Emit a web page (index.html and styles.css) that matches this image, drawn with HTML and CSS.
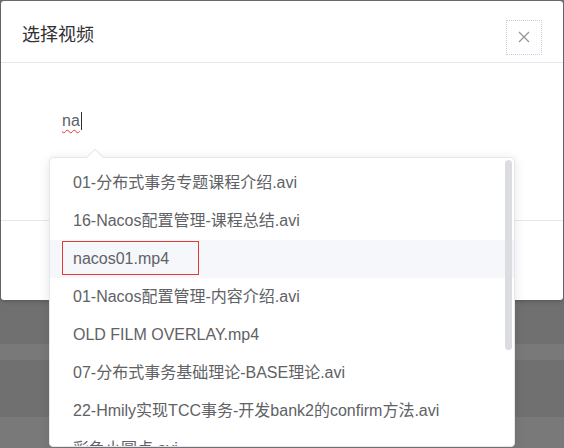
FILE: index.html
```html
<!DOCTYPE html>
<html lang="zh-CN">
<head>
    <meta charset="UTF-8">
    <meta name="viewport" content="width=device-width, initial-scale=1.0">
    <title>选择视频</title>
    <link rel="stylesheet" href="styles.css">
</head>
<body>
    <div class="backdrop">
        <div class="band dark b1"></div>
        <div class="band light b2"></div>
        <div class="band dark b3"></div>
        <div class="band light b4"></div>
    </div>

    <div class="dialog">
        <div class="dialog-header">
            <span class="dialog-title">选择视频</span>
            <button class="dialog-close" type="button">
                <svg width="12" height="12" viewBox="0 0 12 12">
                    <path d="M1 1 L11 11 M11 1 L1 11" stroke="#909399" stroke-width="1.2" fill="none"/>
                </svg>
            </button>
        </div>
        <div class="dialog-body">
            <div class="search-input"><span class="typed">na</span><span class="caret"></span></div>
        </div>
        <div class="dialog-footer"></div>
    </div>

    <div class="suggestions">
        <div class="arrow"></div>
        <ul class="suggestion-list">
            <li>01-分布式事务专题课程介绍.avi</li>
            <li>16-Nacos配置管理-课程总结.avi</li>
            <li class="highlighted">nacos01.mp4<span class="mark"></span></li>
            <li>01-Nacos配置管理-内容介绍.avi</li>
            <li>OLD FILM OVERLAY.mp4</li>
            <li>07-分布式事务基础理论-BASE理论.avi</li>
            <li>22-Hmily实现TCC事务-开发bank2的confirm方法.avi</li>
            <li>彩色小圆点.avi</li>
        </ul>
        <div class="scroll-thumb"></div>
    </div>
</body>
</html>
```

FILE: styles.css
```css
body {
    margin: 0;
    width: 564px;
    height: 448px;
    overflow: hidden;
    background: #717171;
    font-family: "Liberation Sans", "Noto Sans CJK SC", sans-serif;
    position: relative;
}

/* page seen through the mask */
.backdrop {
    display: flex;
    flex-direction: column;
}

.band.dark { background: #707070; }
.band.light { background: #797979; }
.b1 { height: 344px; }
.b2 { height: 16px; }
.b3 { height: 57px; }
.b4 { height: 31px; }

.dialog {
    position: absolute;
    top: 1px;
    left: 1px;
    width: 562px;
    height: 299px;
    background: #fff;
    border-radius: 3px;
    box-shadow: 0 1px 4px rgba(0, 0, 0, 0.25);
    display: flex;
    flex-direction: column;
}

.dialog-header {
    height: 61px;
    border-bottom: 1px solid #e6e6ee;
    display: flex;
    align-items: center;
    justify-content: space-between;
    padding: 0 21px;
}

.dialog-title {
    font-size: 18px;
    color: #303133;
    margin-top: 2px;
}

.dialog-close {
    width: 36px;
    height: 35px;
    margin-top: 11px;
    border: 1px dotted #c8cad8;
    background: #fff;
    padding: 0;
    display: flex;
    align-items: center;
    justify-content: center;
}

.dialog-body {
    height: 158px;
    border-bottom: 1px solid #e6e6ee;
    padding: 48px 0 0 61px;
    box-sizing: border-box;
}

.search-input {
    display: flex;
    align-items: center;
    height: 20px;
    font-size: 16px;
    color: #606266;
}

.typed {
    text-decoration: underline wavy #e53935;
    text-decoration-thickness: 1px;
    text-underline-offset: 3px;
}

.caret {
    width: 1px;
    height: 18px;
    background: #303133;
    margin-left: 1px;
}

.dialog-footer {
    flex: 1;
}

.suggestions {
    position: absolute;
    top: 157px;
    left: 49px;
    width: 464px;
    height: 288px;
    background: #fff;
    border: 1px solid #e4e7ed;
    border-radius: 4px;
    box-shadow: 0 2px 12px rgba(0, 0, 0, 0.1);
}

.arrow {
    position: absolute;
    top: -7px;
    left: 39px;
    width: 11px;
    height: 11px;
    background: #fff;
    border-top: 1px solid #e4e7ed;
    border-left: 1px solid #e4e7ed;
    transform: rotate(45deg);
}

.suggestion-list {
    list-style: none;
    margin: 0;
    padding: 6px 0 0;
    height: 100%;
    box-sizing: border-box;
    overflow: hidden;
    border-radius: 4px;
}

.suggestion-list li {
    position: relative;
    line-height: 38px;
    height: 38px;
    padding: 0 23px;
    font-size: 16px;
    color: #606266;
    white-space: nowrap;
}

.suggestion-list li.highlighted {
    background: #f5f7fa;
}

/* red annotation box */
.mark {
    position: absolute;
    top: 1px;
    left: 12px;
    width: 135px;
    height: 32px;
    border: 1px solid #e53935;
}

.scroll-thumb {
    position: absolute;
    top: 2px;
    right: 2px;
    width: 7px;
    height: 190px;
    background: #dcdde1;
    border-radius: 4px;
}
```
